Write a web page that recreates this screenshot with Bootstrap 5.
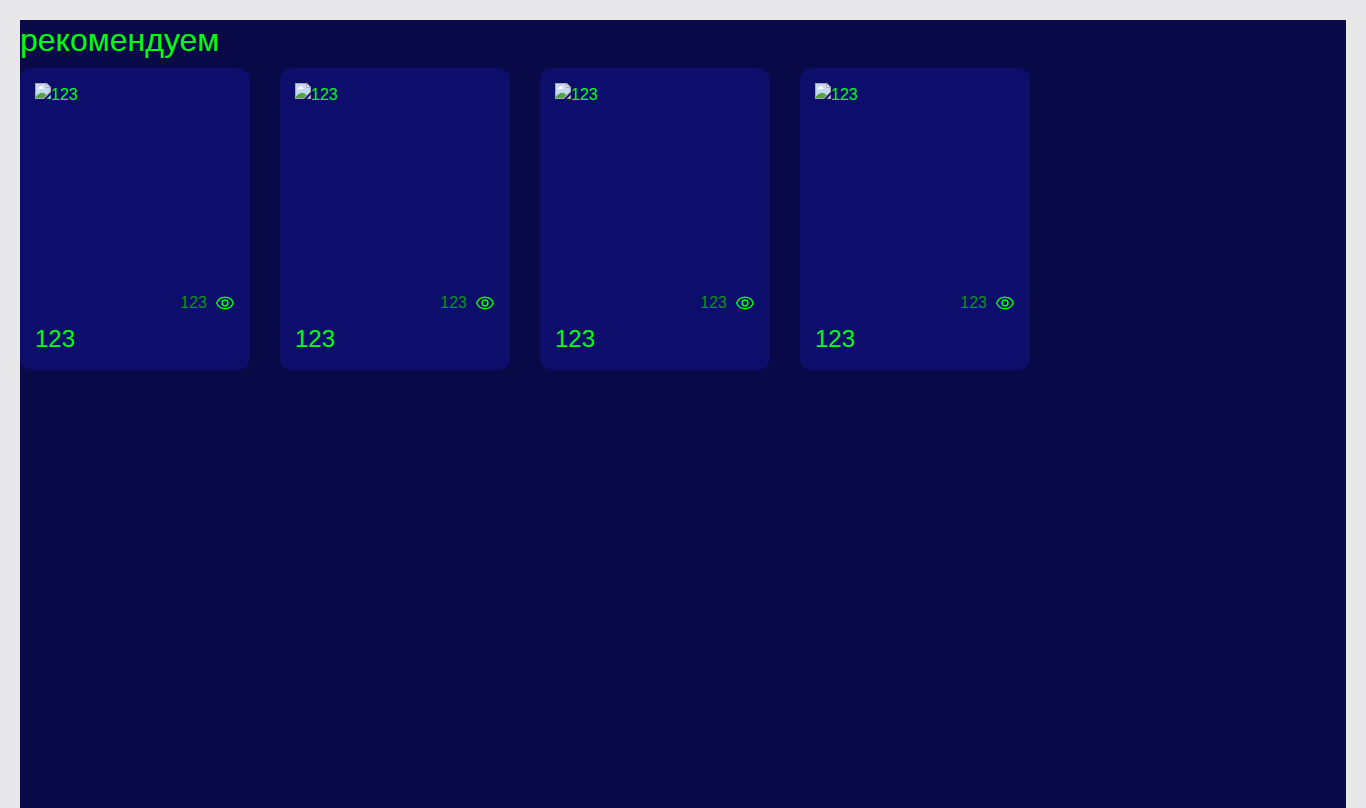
<!DOCTYPE html>
<html lang="ru">
<head>
<meta charset="utf-8">
<meta name="viewport" content="width=device-width, initial-scale=1">
<title>рекомендуем</title>
<link href="https://cdn.jsdelivr.net/npm/bootstrap@5.3.0/dist/css/bootstrap.min.css" rel="stylesheet">
<style>
  body { background: #e8e8ea; color: #00ff0d; font-family: "Liberation Sans", Arial, sans-serif; padding: 20px 20px 0; }
  .page-panel { background: #090947; }
  .section-title { font-size: 32px; line-height: 40px; font-weight: 400; }
  .film-list { gap: 30px; }
  .film-card { width: 230px; padding: 15px; border: 0; border-radius: 12px; background: #0d0d6b; color: inherit; }
  .film-poster { height: 200px; font-size: 16px; line-height: 24px; }
  .film-views { font-size: 16px; line-height: 24px; }
  .view-count { color: #05961a; }
  .film-name { font-size: 24px; line-height: 32px; font-weight: 400; }
</style>
</head>
<body class="min-vh-100 d-flex flex-column">
<svg class="d-none" aria-hidden="true">
  <symbol id="eye" viewBox="0 0 20 20">
    <path d="M1.700 10C3.200 6.300 6.200 4.300 10 4.300S16.800 6.300 18.300 10C16.800 13.700 13.800 15.700 10 15.700S3.200 13.700 1.700 10Z" fill="none" stroke="currentColor" stroke-width="1.400" stroke-linejoin="round"/>
    <circle cx="10" cy="10" r="2.900" fill="none" stroke="currentColor" stroke-width="1.500"/>
  </symbol>
  <symbol id="missing" viewBox="0 0 16 16">
    <path d="M0 0H12L16 4V9L9 16H0Z" fill="#a3a7b0"/>
    <path d="M1 1H11V5H15V8.600L8.600 15H1Z" fill="#c6d8f8"/>
    <path d="M2.500 6Q2.500 4.600 4 4.500Q4.600 3 6 3.300Q7.600 3.300 7.800 4.700Q8.800 5 8.500 6Z" fill="#fff"/>
    <path d="M1 15V13.500Q4.500 9.500 7.500 9.800Q9.800 10 11.500 12L8.600 15Z" fill="#56a545"/>
    <path d="M11.500 .500L15.500 4.500H11.500Z" fill="#f4f5f8" stroke="#a3a7b0"/>
    <path d="M16 11.500V16H11.500Z" fill="#a3a7b0"/>
    <path d="M15 13.400V15H13.400Z" fill="#c6d8f8"/>
  </symbol>
</svg>
<main class="page-panel flex-grow-1">
  <h2 class="section-title mb-2">рекомендуем</h2>
  <div class="film-list d-flex flex-wrap">
    <article class="card film-card">
      <div class="film-poster d-flex align-items-start"><svg width="16" height="16" aria-hidden="true"><use href="#missing"/></svg><span>123</span></div>
      <div class="film-views d-flex justify-content-end align-items-center gap-2 my-2"><span class="view-count">123</span><svg width="20" height="20" aria-hidden="true"><use href="#eye"/></svg></div>
      <h3 class="film-name mb-0">123</h3>
    </article>
    <article class="card film-card">
      <div class="film-poster d-flex align-items-start"><svg width="16" height="16" aria-hidden="true"><use href="#missing"/></svg><span>123</span></div>
      <div class="film-views d-flex justify-content-end align-items-center gap-2 my-2"><span class="view-count">123</span><svg width="20" height="20" aria-hidden="true"><use href="#eye"/></svg></div>
      <h3 class="film-name mb-0">123</h3>
    </article>
    <article class="card film-card">
      <div class="film-poster d-flex align-items-start"><svg width="16" height="16" aria-hidden="true"><use href="#missing"/></svg><span>123</span></div>
      <div class="film-views d-flex justify-content-end align-items-center gap-2 my-2"><span class="view-count">123</span><svg width="20" height="20" aria-hidden="true"><use href="#eye"/></svg></div>
      <h3 class="film-name mb-0">123</h3>
    </article>
    <article class="card film-card">
      <div class="film-poster d-flex align-items-start"><svg width="16" height="16" aria-hidden="true"><use href="#missing"/></svg><span>123</span></div>
      <div class="film-views d-flex justify-content-end align-items-center gap-2 my-2"><span class="view-count">123</span><svg width="20" height="20" aria-hidden="true"><use href="#eye"/></svg></div>
      <h3 class="film-name mb-0">123</h3>
    </article>
  </div>
</main>
<script src="https://cdn.jsdelivr.net/npm/bootstrap@5.3.0/dist/js/bootstrap.bundle.min.js"></script>
</body>
</html>
